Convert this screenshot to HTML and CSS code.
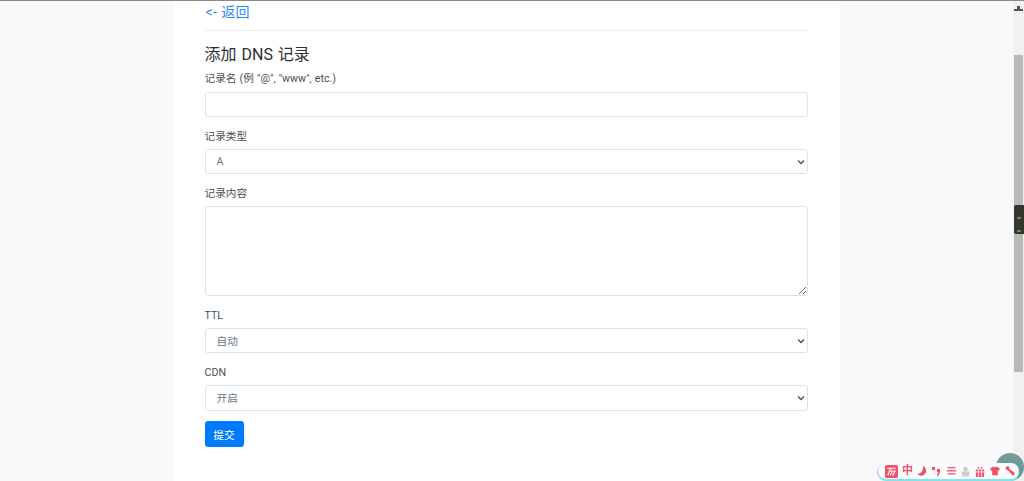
FILE: index.html
```html
<!DOCTYPE html>
<html lang="zh">
<head>
<meta charset="utf-8">
<title>添加 DNS 记录</title>
<link rel="stylesheet" href="styles.css">
</head>
<body>
<div class="topline"></div>
<div class="window">
  <main class="page">
    <div class="card">
      <a class="back" href="#">&lt;- 返回</a>
      <hr class="rule">
      <h4 class="title">添加 DNS 记录</h4>
      <form>
        <div class="group">
          <label class="label">记录名 (例 "@", "www", etc.)</label>
          <input class="control" type="text">
        </div>
        <div class="group">
          <label class="label">记录类型</label>
          <div class="select-wrap">
            <select class="control picker"><option>A</option></select>
            <svg class="chevron" width="8" height="6" viewBox="0 0 8 6"><path d="M1 1.500 4 4.500 7 1.500" stroke="#495057" stroke-width="1.300" fill="none"/></svg>
          </div>
        </div>
        <div class="group">
          <label class="label">记录内容</label>
          <textarea class="control area"></textarea>
        </div>
        <div class="group">
          <label class="label">TTL</label>
          <div class="select-wrap">
            <select class="control picker"><option>自动</option></select>
            <svg class="chevron" width="8" height="6" viewBox="0 0 8 6"><path d="M1 1.500 4 4.500 7 1.500" stroke="#495057" stroke-width="1.300" fill="none"/></svg>
          </div>
        </div>
        <div class="group">
          <label class="label">CDN</label>
          <div class="select-wrap">
            <select class="control picker"><option>开启</option></select>
            <svg class="chevron" width="8" height="6" viewBox="0 0 8 6"><path d="M1 1.500 4 4.500 7 1.500" stroke="#495057" stroke-width="1.300" fill="none"/></svg>
          </div>
        </div>
        <button class="submit" type="button">提交</button>
      </form>
    </div>
  </main>
  <aside class="scrollbar">
    <svg class="scroll-icon" width="11" height="10" viewBox="0 0 11 10"><path d="M1 9V7h3V4h3v3h3v2z" fill="#555"/></svg>
    <div class="thumb"></div>
  </aside>
</div>
<div class="dock"><span class="dock-line dock-amber"></span><span class="dock-line dock-green"></span></div>
<div class="bubble"></div>
<div class="ime">
  <svg width="13" height="13" viewBox="0 0 14 14"><rect width="14" height="14" rx="2" fill="#f4506b"/><path d="M2.500 3.500h9M6 3.500 3 11M4.500 6.500h6.500L8 11.500M8 6.500 5.500 11" stroke="#fff" stroke-width="1.100" fill="none"/></svg>
  <span class="ime-text">中</span>
  <svg width="10" height="10" viewBox="0 0 12 12"><path d="M7 0a6 6 0 1 1-7 9c4 1 8-3 7-9z" fill="#f4506b"/></svg>
  <svg width="8" height="10" viewBox="0 0 8 10"><path d="M0 1h3v3H0zM5 3h3v3L6.500 10H5l1-4H5z" fill="#f4506b"/></svg>
  <svg width="11" height="10" viewBox="0 0 14 12"><path d="M2 1h10v1.500H2zM1 5h12v1.500H1zM2 9h10v1.500H2z" fill="#f4506b"/></svg>
  <svg width="9" height="11" viewBox="0 0 12 13"><circle cx="6" cy="3" r="3" fill="#ccc"/><rect x="1" y="6" width="10" height="7" rx="1" fill="#ccc"/></svg>
  <svg width="10" height="11" viewBox="0 0 12 13"><path d="M1 4h10v9H1zM3 1h2v2H3zM7 1h2v2H7z" fill="#f4506b"/><path d="M4 4v9M8 4v9M1 7h10" stroke="#fff"/></svg>
  <svg width="10" height="10" viewBox="0 0 14 12"><path d="M4 0h2l1 1 1-1h2l4 3-2 3-1-1v7H3V5L2 6 0 3z" fill="#f4506b"/></svg>
  <svg width="10" height="10" viewBox="0 0 13 13"><path d="M1 2 3 0C5 0 6 2 5.500 3.500L13 9.500 10.500 13 4 5.500C2 6 0 4 1 2z" fill="#f4506b"/></svg>
</div>
</body>
</html>
```
FILE: styles.css
```css
* { box-sizing: border-box; }
html, body { margin: 0; height: 481px; overflow: hidden; }
body {
  font-family: Roboto, "Noto Sans CJK SC", sans-serif;
  font-size: 10.67px;
  color: #343a40;
  background: #f8f9fa;
}
.topline { height: 1px; background: #8a8a8a; }
.window { display: flex; height: 480px; }
.page { flex: 1; display: flex; justify-content: center; overflow: hidden; }
.card { width: 666px; height: 480px; background: #fff; padding: 0 32px 0 31px; }
.back { display: block; height: 23px; padding: 2px 0 0 1px; font-size: 14px; line-height: 18px; letter-spacing: .4px; color: #2b8cff; text-decoration: none; }
.rule { margin: 6px 0 0; border: 0; border-top: 1px solid rgba(0,0,0,.08); }
.title { margin: 14px 0 6.200px; font-size: 16px; font-weight: 400; line-height: 19px; word-spacing: 1px; color: #2b3035; }
.group { margin-bottom: 10.67px; }
.label { display: block; height: 16px; padding-top: 1px; line-height: 16px; margin-bottom: 5.33px; word-spacing: .5px; color: #495057; }
.control {
  display: block;
  width: 100%;
  height: 25.33px;
  padding: 0 8px;
  font-family: inherit;
  font-size: 10.67px;
  color: #6c757d;
  background: #fff;
  border: 1px solid #dee2e6;
  border-radius: 2.67px;
}
.area { height: 90px; padding: 4px 8px; }
.select-wrap { position: relative; }
.picker { appearance: none; padding: 1px 11px 0; }
.chevron { position: absolute; top: 10px; right: 3px; }
.submit {
  display: block;
  width: 39px;
  height: 25.33px;
  padding: 0;
  font-family: inherit;
  font-size: 10.67px;
  color: #fff;
  background: #007bff;
  border: 1px solid #007bff;
  border-radius: 2.67px;
}
.scrollbar { position: relative; width: 11px; background: #f1f1f1; }
.scroll-icon { position: absolute; top: 1px; left: 0; }
.thumb { position: absolute; top: 54px; left: 1px; width: 9px; height: 317px; background: #b9b9b9; }
.dock { position: absolute; top: 205px; left: 1014px; width: 10px; height: 29px; background: #33352f; border-radius: 2px 0 0 2px; }
.dock-line { position: absolute; left: 3px; width: 4px; height: 2px; }
.dock-amber { top: 12px; background: #8a7a4a; }
.dock-green { top: 25px; background: #4f9a3c; }
.bubble { position: absolute; top: 453px; left: 996px; width: 28px; height: 28px; border-radius: 50%; background: radial-gradient(circle at 50% 70%, #4d9c9a, #8a9a96); }
.ime {
  position: absolute;
  top: 463px;
  left: 878px;
  width: 141px;
  height: 16px;
  display: grid;
  grid-template-columns: 17px 15px 15px 14px 15px 14px 15px 15px 10px;
  align-items: center;
  padding-left: 7px;
  background: #fbfbfd;
  border-radius: 8px;
  box-shadow: 0 2px 0 #7fe6ee, -1px 1px 0 #d9a8ef;
}
.ime-text { font-size: 11px; font-weight: 700; line-height: 12px; color: #f4506b; }
```
